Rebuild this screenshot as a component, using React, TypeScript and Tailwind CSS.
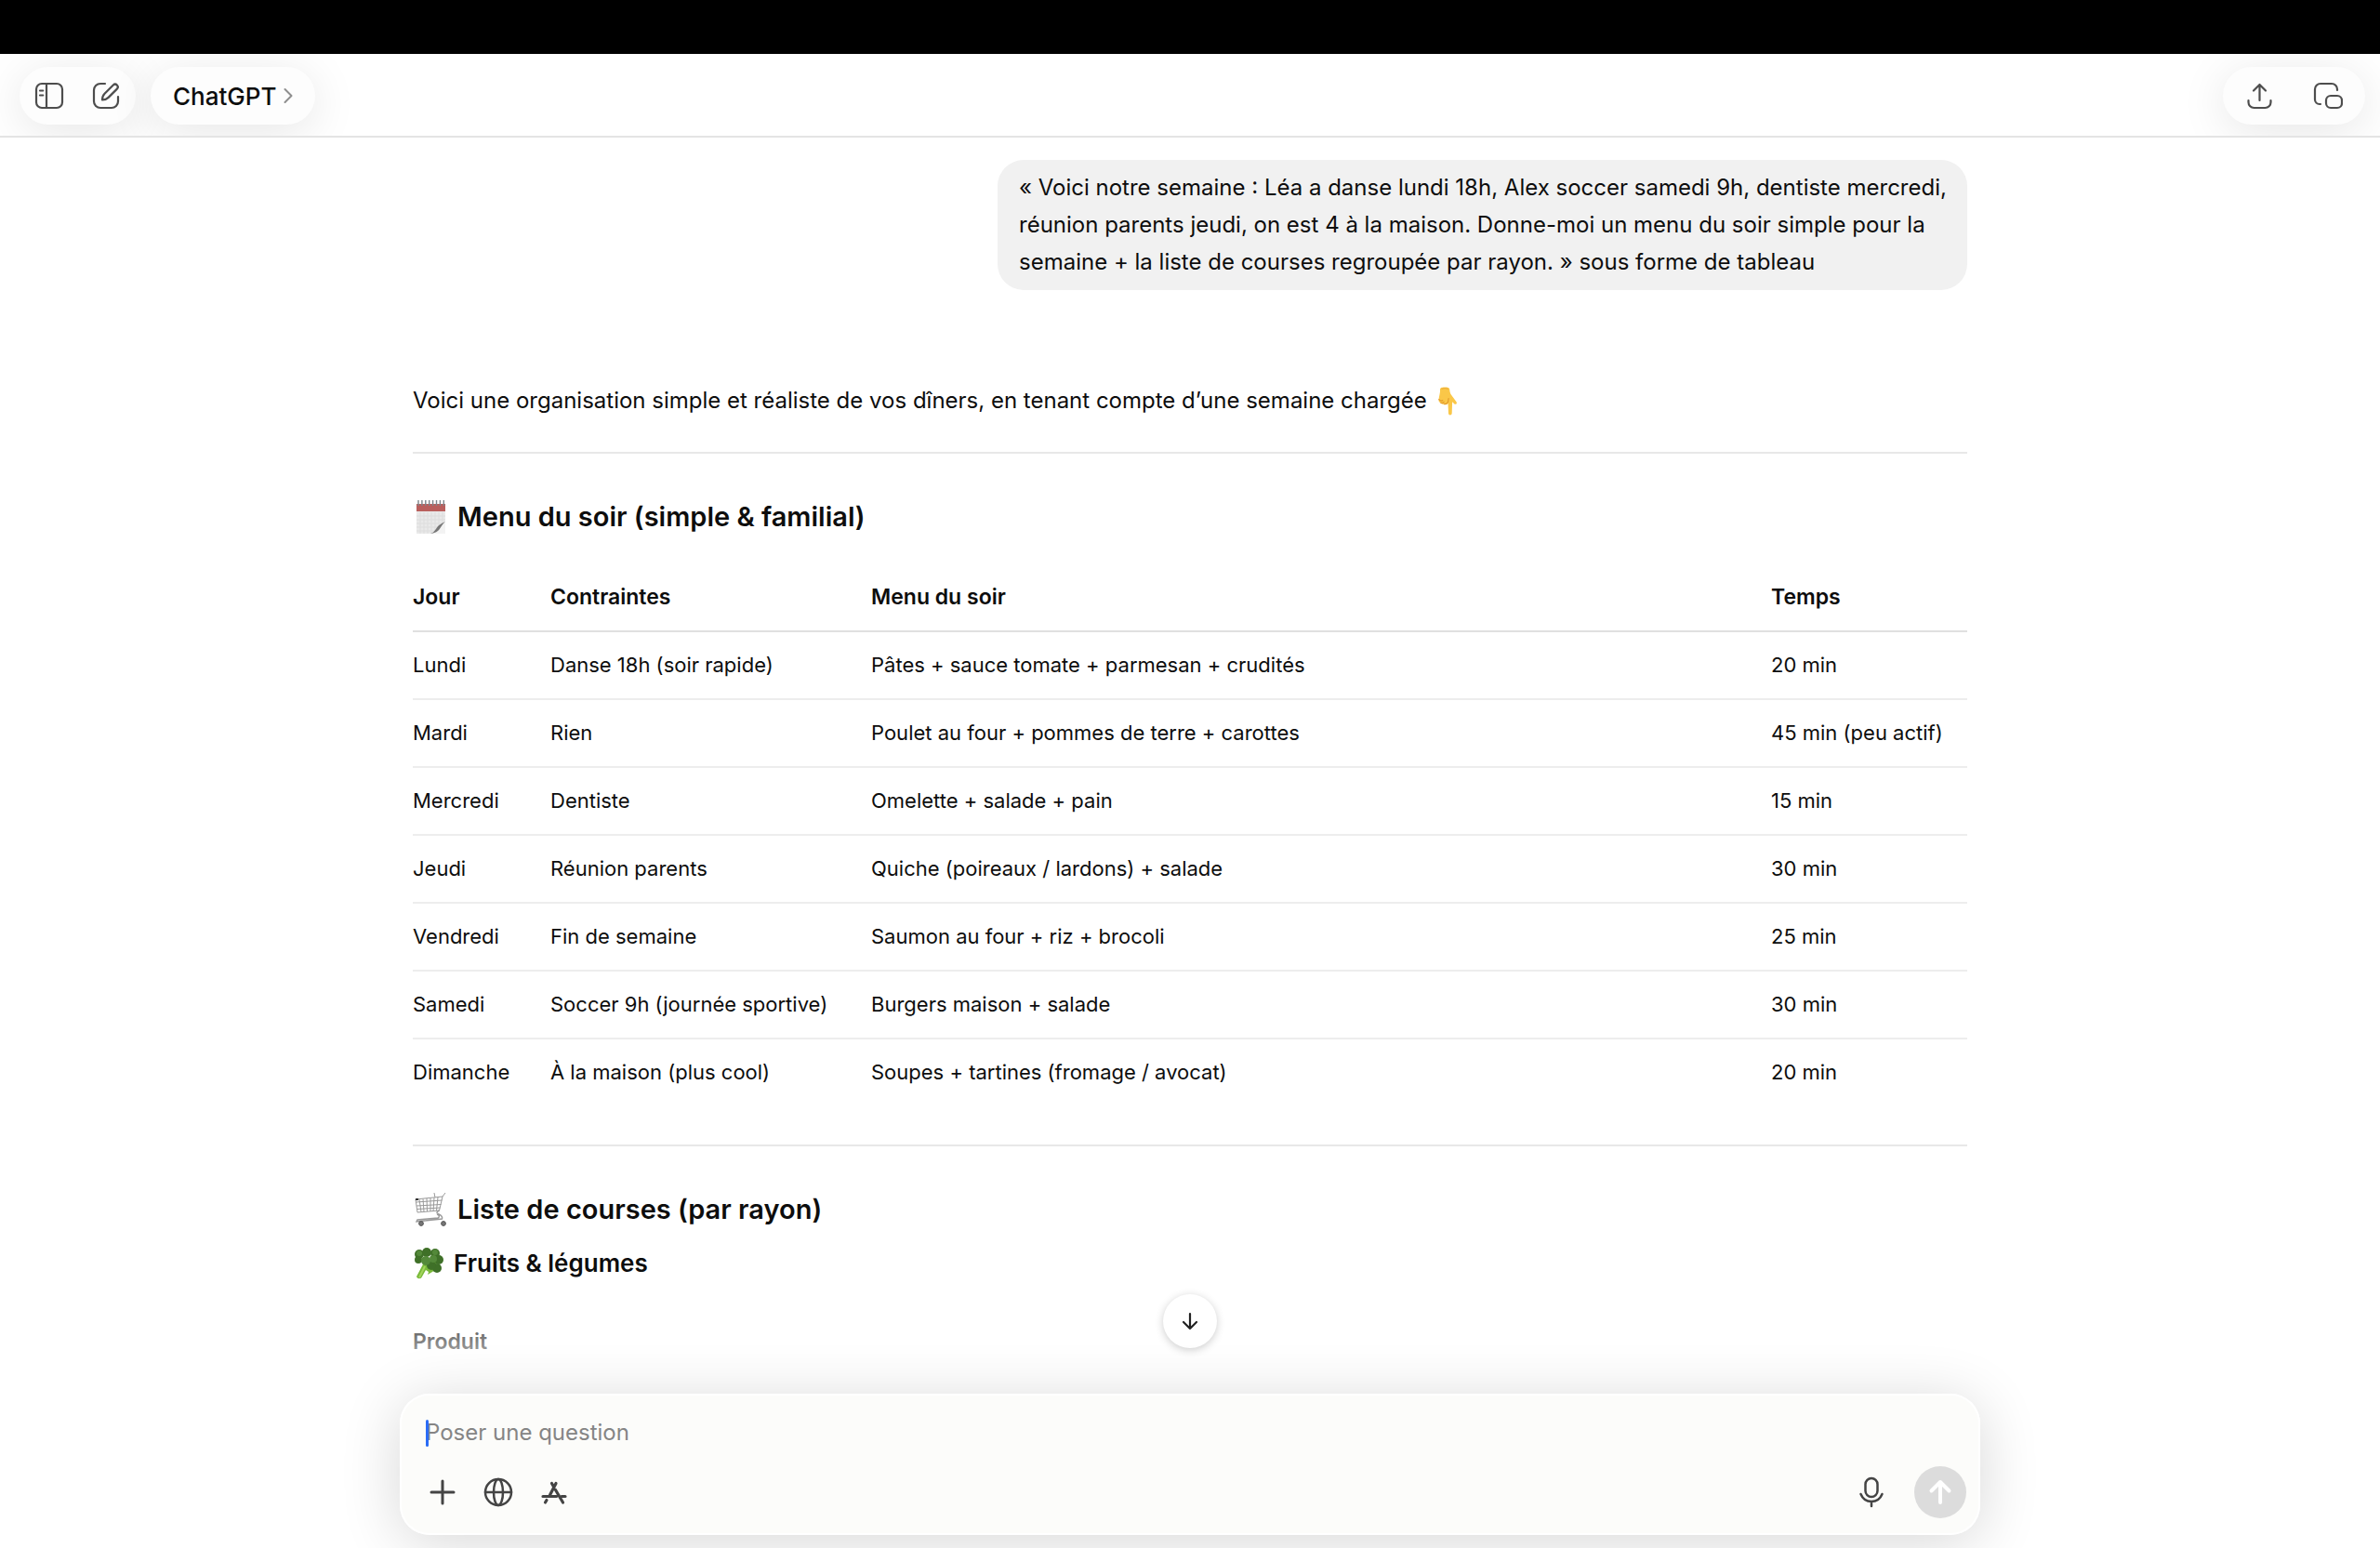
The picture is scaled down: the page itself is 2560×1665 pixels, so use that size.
const MENU = [
  ['Lundi', 'Danse 18h (soir rapide)', 'Pâtes + sauce tomate + parmesan + crudités', '20 min'],
  ['Mardi', 'Rien', 'Poulet au four + pommes de terre + carottes', '45 min (peu actif)'],
  ['Mercredi', 'Dentiste', 'Omelette + salade + pain', '15 min'],
  ['Jeudi', 'Réunion parents', 'Quiche (poireaux / lardons) + salade', '30 min'],
  ['Vendredi', 'Fin de semaine', 'Saumon au four + riz + brocoli', '25 min'],
  ['Samedi', 'Soccer 9h (journée sportive)', 'Burgers maison + salade', '30 min'],
  ['Dimanche', 'À la maison (plus cool)', 'Soupes + tartines (fromage / avocat)', '20 min'],
];

const stroke = {
  fill: 'none',
  stroke: 'currentColor',
  strokeWidth: 2.5,
  strokeLinecap: 'round',
  strokeLinejoin: 'round',
} as const;

function SidebarIcon() {
  return (
    <svg width="32" height="32" viewBox="0 0 32 32" {...stroke} strokeWidth={2.2}>
      <rect x="2" y="3" width="28" height="26" rx="6" />
      <path d="M13 3v26M6 10.5h3.200M6 15.500h3.200" />
    </svg>
  );
}

function ComposeIcon() {
  return (
    <svg width="32" height="32" viewBox="0 0 32 32" {...stroke} strokeWidth={2.2}>
      <path d="M15 3H10a7 7 0 0 0-7 7v12a7 7 0 0 0 7 7h12a7 7 0 0 0 7-7v-5" />
      <path d="M12 20.500c0-3 .8-5 2.500-6.700l9.300-9.300a2.900 2.900 0 0 1 4.100 4.100L18.600 17.900c-1.700 1.700-3.700 2.500-6.600 2.600z" />
    </svg>
  );
}

function ShareIcon() {
  return (
    <svg width="32" height="32" viewBox="0 0 32 32" {...stroke} strokeWidth={2.2}>
      <path d="M15.500 21V4M9 10.500 15.500 4l6.500 6.500" />
      <path d="M3.500 21v2a6 6 0 0 0 6 6h12a6 6 0 0 0 6-6v-2" />
    </svg>
  );
}

function WindowIcon() {
  return (
    <svg width="32" height="32" viewBox="0 0 32 32" {...stroke} strokeWidth={2.2}>
      <path d="M26 10V9a6 6 0 0 0-6-6H8a6 6 0 0 0-6 6v11a5 5 0 0 0 5 5h1" />
      <rect x="14" y="16" width="17" height="13" rx="5" />
    </svg>
  );
}

function HandIcon() {
  return (
    <svg className="ml-3 inline-block align-middle" width="21" height="32" viewBox="0 0 21 32">
      <path d="M2 2.500C2.200.8 5 .5 7.500.5s4.500.6 4.700 2c.2 1.800.3 3.500 1.300 5.500l6.200 8.500c.8 1.600-1 3-2.300 2l-2.300-2.300-.4 12.300c-.1 2.500-3.600 2.500-3.700 0L10.500 18c-1 1.500-3 1.700-4.200.8-1.500.3-3-.4-3.600-1.500C1 16.800.3 15.500.5 14c.2-3.500 2-8 1.500-11.500z" fill="#fac748" />
      <path d="M.8 13.500c.8 1.500 2.600 2 4 1.200M2.700 17.300c1.200.4 2.700 0 3.500-.9M6.300 18.800c1.300 0 3-.6 4.200-2.300l.6-4" fill="none" stroke="#e0962a" strokeWidth="1.100" strokeLinecap="round" />
      <path d="M3.500 2.500c2-1 5-1 7.300 0" fill="none" stroke="#eeb03a" strokeWidth="1.200" />
    </svg>
  );
}

function CalendarIcon() {
  return (
    <svg className="mr-3 shrink-0" width="36" height="38" viewBox="0 0 36 38">
      <path d="M4 5h31v32H4z" fill="#e9e9e9" />
      <path d="M4 5h31v8H4z" fill="#b95f5d" />
      <path d="M8 14v23M12 14v23M16 14v23M20 14v23M24 14v23M28 14v23M32 14v23M4 18h31M4 22h31M4 26h31M4 30h31M4 34h31" stroke="#dadada" strokeWidth=".7" />
      <path d="M19 37c6-2 4-7 16-13v13z" fill="#f3f3f3" />
      <path d="M19 37c7-2 4-8 16-13-6 5-5 12-16 13z" fill="#777" />
      <path d="M6 1v6M9.900 1v6M13.800 1v6M17.700 1v6M21.600 1v6M25.500 1v6M29.400 1v6M33.300 1v6" stroke="#7d858b" strokeWidth="1.400" />
    </svg>
  );
}

function CartIcon() {
  return (
    <svg className="mr-3 shrink-0" width="36" height="38" viewBox="0 0 36 38" fill="none" stroke="#9a9a9a">
      <path d="M35 1 32 5 28.500 20 5 22 3 8l29-3M3.500 11l28-2M4 15l26.500-1.500M4.500 18.500 29.500 17M7 8l2 13.500M11 7.500l1 14M15 7l.5 14M19 6.700V21M23 6.200 22 21M27 5.700 25.500 20M23 1l1 5" />
      <path d="M28.500 20c-8 4 5 3 3 9L4 32l1-2 22-2c2-1 2-3-1-4" strokeWidth="1.400" />
      <path d="M3 7h3v2H3z" fill="#333" stroke="none" />
      <circle cx="9" cy="34" r="2.400" fill="#777" stroke="#555" />
      <circle cx="33" cy="34" r="2.400" fill="#777" stroke="#555" />
    </svg>
  );
}

function BroccoliIcon() {
  return (
    <svg className="mr-[10px] shrink-0" width="34" height="34" viewBox="0 0 34 34">
      <path d="M12 16 4 31c1 3 5 3 6 0l4-7 3 2-1 3 5-3 4-3V14z" fill="#79b93a" />
      <path d="M13 20 7 32" stroke="#a3d45c" strokeWidth="2" />
      <g fill="#3f7028">
        <circle cx="7" cy="7" r="5" />
        <circle cx="15" cy="5" r="5" />
        <circle cx="24" cy="6" r="5" />
        <circle cx="28" cy="13" r="5" />
        <circle cx="26" cy="22" r="5" />
        <circle cx="6" cy="13" r="4" />
        <circle cx="20" cy="19" r="5" />
      </g>
      <g fill="#54893a">
        <circle cx="14" cy="14" r="5" />
        <circle cx="22" cy="12" r="4" />
        <circle cx="7" cy="6" r="3" />
        <circle cx="24" cy="5" r="3" />
      </g>
    </svg>
  );
}

function GlobeIcon() {
  return (
    <svg width="32" height="32" viewBox="0 0 32 32" {...stroke}>
      <circle cx="16" cy="16" r="14" />
      <ellipse cx="16" cy="16" rx="5" ry="14" />
      <path d="M2 16h28" />
    </svg>
  );
}

function AppsIcon() {
  return (
    <svg width="32" height="32" viewBox="0 0 32 32" {...stroke} strokeWidth={3.2}>
      <path d="M18 6.500 11.500 19M13.500 6.500l2 3.500M17.500 13.500 25.500 27M4 20.500h14.500M24 20.500h4M8 24.500 6.500 27" />
    </svg>
  );
}

function MicIcon() {
  return (
    <svg width="32" height="36" viewBox="0 0 32 36" {...stroke}>
      <rect x="9.500" y="3" width="13" height="20" rx="6.500" />
      <path d="M4.500 20c2 5 6.500 8 11.500 8s9.500-3 11.500-8M16 28v5" />
    </svg>
  );
}

function Header() {
  return (
    <header className="flex h-[90px] shrink-0 items-center justify-between overflow-hidden border-b-2 border-[#e4e4e4] bg-white pt-[2px] pr-4 pl-[21px]">
      <div className="flex items-center gap-4">
        <div className="flex h-[62px] w-[125px] items-center justify-between rounded-full bg-[#fdfdfd] px-4 text-[#4d4d4d] shadow-[0_8px_50px_rgba(0,0,0,0.1)]">
          <button aria-label="Barre latérale"><SidebarIcon /></button>
          <button aria-label="Nouveau chat"><ComposeIcon /></button>
        </div>
        <button className="flex h-[62px] items-center gap-2 rounded-full bg-[#fdfdfd] px-6 text-[26px] font-medium shadow-[0_8px_50px_rgba(0,0,0,0.1)]">
          ChatGPT
          <svg width="10" height="18" viewBox="0 0 10 18" {...stroke} stroke="#8e8e8e" strokeWidth={2}>
            <path d="m1.500 2 7 7-7 7" />
          </svg>
        </button>
      </div>
      <div className="flex h-[62px] w-[153px] items-center justify-between rounded-full bg-[#fdfdfd] px-6 text-[#4d4d4d] shadow-[0_8px_50px_rgba(0,0,0,0.1)]">
        <button aria-label="Partager"><ShareIcon /></button>
        <button aria-label="Fenêtre"><WindowIcon /></button>
      </div>
    </header>
  );
}

function MenuTable() {
  return (
    <table className="mt-[30px] w-full text-left text-[22px]">
      <thead className="text-[23px] leading-8">
        <tr className="border-b-2 border-[#e0e0e0]">
          <th className="w-[148px] py-5 font-semibold">Jour</th>
          <th className="w-[345px] py-5 font-semibold">Contraintes</th>
          <th className="py-5 font-semibold">Menu du soir</th>
          <th className="w-[211px] py-5 font-semibold">Temps</th>
        </tr>
      </thead>
      <tbody className="leading-[31px]">
        {MENU.map((row) => (
          <tr key={row[0]} className="border-b-2 border-[#ededed] last:border-0">
            {row.map((cell) => (
              <td key={cell} className="py-5 whitespace-nowrap">{cell}</td>
            ))}
          </tr>
        ))}
      </tbody>
    </table>
  );
}

function Composer() {
  return (
    <div className="mx-auto w-full max-w-[1700px] rounded-[32px] bg-[#fcfcfa] pt-6 pr-[15px] pb-[18px] pl-[28px] shadow-[0_8px_64px_rgba(0,0,0,0.16)] ring-2 ring-white ring-inset">
      <div className="relative">
        <input
          aria-label="Poser une question"
          placeholder="Poser une question"
          className="block h-9 w-full bg-transparent text-[24px] outline-none placeholder:text-[#858585]"
        />
        <span className="absolute top-1 left-0 h-[29px] w-[3px] rounded-full bg-[#2a6cf6]" />
      </div>
      <div className="mt-[18px] flex items-center text-[#444]">
        <div className="flex items-center gap-7 pl-[2px]">
          <button aria-label="Ajouter">
            <svg width="32" height="32" viewBox="0 0 32 32" {...stroke} strokeWidth={3}>
              <path d="M16 4v24M4 16h24" />
            </svg>
          </button>
          <button aria-label="Recherche web"><GlobeIcon /></button>
          <button aria-label="Applications"><AppsIcon /></button>
        </div>
        <div className="ml-auto flex items-center gap-[30px]">
          <button aria-label="Dicter"><MicIcon /></button>
          <button aria-label="Envoyer" className="flex size-14 items-center justify-center rounded-full bg-[#dcdcdc] text-white">
            <svg width="28" height="28" viewBox="0 0 28 28" {...stroke} strokeWidth={4}>
              <path d="M14 25V3M4.500 12.500 14 3l9.500 9.500" />
            </svg>
          </button>
        </div>
      </div>
    </div>
  );
}

export default function App() {
  return (
    <div className="flex h-screen flex-col bg-white font-['Inter','Liberation_Sans',sans-serif] text-[#0d0d0d]">
      <div className="h-[58px] shrink-0 bg-black" />
      <Header />
      <main className="relative min-h-0 flex-1 overflow-hidden">
        <div className="mx-auto max-w-[1672px] pt-6">
          <div className="ml-auto w-fit max-w-[1043px] rounded-[28px] bg-[#f1f1f1] py-[10px] pr-4 pl-[23px] text-[24px] leading-10">
            « Voici notre semaine : Léa a danse lundi 18h, Alex soccer samedi 9h, dentiste mercredi, réunion parents jeudi, on est 4 à la maison. Donne-moi un menu du soir simple pour la semaine + la liste de courses regroupée par rayon. » sous forme de tableau
          </div>

          <p className="mt-[99px] text-[24px] leading-10">
            Voici une organisation simple et réaliste de vos dîners, en tenant compte d’une semaine chargée
            <HandIcon />
          </p>
          <hr className="mt-[35px] border-t-2 border-[#e8e8e8]" />
          <h2 className="mt-12 flex items-center text-[29px] leading-10 font-semibold">
            <CalendarIcon />
            Menu du soir (simple &amp; familial)
          </h2>
          <MenuTable />

          <hr className="mt-[42px] border-t-2 border-[#e8e8e8]" />
          <h2 className="mt-12 flex items-center text-[29px] leading-10 font-semibold">
            <CartIcon />
            Liste de courses (par rayon)
          </h2>
          <h3 className="mt-[18px] flex items-center text-[26px] leading-10 font-semibold">
            <BroccoliIcon />
            Fruits &amp; légumes
          </h3>
          <table className="mt-7 w-full text-left text-[23px] leading-8">
            <thead>
              <tr>
                <th className="py-5 font-semibold">Produit</th>
              </tr>
            </thead>
          </table>
        </div>

        <div className="absolute inset-x-0 bottom-0 flex flex-col items-center bg-linear-to-b from-transparent to-white to-38% pb-[14px]">
          <button aria-label="Aller en bas" className="mb-[49px] flex size-[58px] items-center justify-center rounded-full bg-white text-[#222] shadow-[0_2px_10px_rgba(0,0,0,0.2)]">
            <svg width="24" height="24" viewBox="0 0 24 24" {...stroke} strokeWidth={2.2}>
              <path d="M12 4v16M5 13l7 7 7-7" />
            </svg>
          </button>
          <Composer />
        </div>
      </main>
    </div>
  );
}
